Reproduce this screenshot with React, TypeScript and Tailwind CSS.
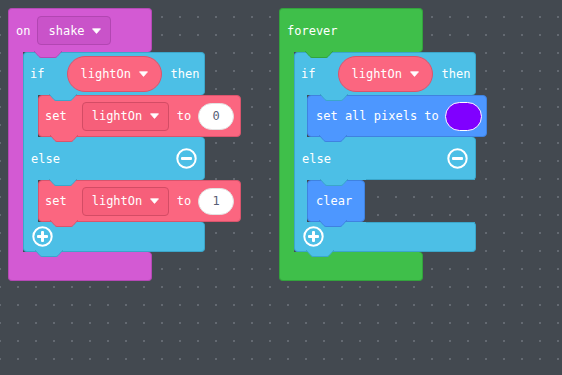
import type { ReactNode } from "react";

const mono = "font-['DejaVu_Sans_Mono',monospace] text-[12px] leading-none text-white";

function Tab({ fill, stroke, className }: { fill: string; stroke: string; className: string }) {
  return (
    <svg
      width="28"
      height="7"
      viewBox="0 0 28 7"
      className={`pointer-events-none absolute top-full z-10 -mt-px ${className}`}
    >
      <path d="M0 0 L5 5.6 Q5.8 6.5 7 6.5 L21 6.5 Q22.2 6.5 23 5.6 L28 0 Z" fill={fill} />
      <path d="M0 0 L5 5.6 Q5.8 6.5 7 6.5 L21 6.5 Q22.2 6.5 23 5.6 L28 0" fill="none" stroke={stroke} strokeWidth="1" />
    </svg>
  );
}

function Caret() {
  return (
    <svg width="9" height="6" viewBox="0 0 9 6" className="shrink-0">
      <path d="M0.5 0.8 L8.5 0.8 L4.5 5.4 Z" fill="#fff" stroke="#fff" strokeWidth="0.8" strokeLinejoin="round" />
    </svg>
  );
}

function CircleBtn({ plus }: { plus?: boolean }) {
  return (
    <svg width="21" height="21" viewBox="0 0 21 21" className="shrink-0">
      <circle cx="10.5" cy="10.5" r="9.2" fill="none" stroke="#fff" strokeWidth="2" />
      <rect x="5" y="9" width="11" height="3" rx="1" fill="#fff" />
      {plus && <rect x="9" y="5" width="3" height="11" rx="1" fill="#fff" />}
    </svg>
  );
}

function LightOnDropdown() {
  return (
    <div className="flex h-[29px] w-[87px] items-center rounded-[4px] border border-[#d34c65] bg-[#f65f7a] pl-[9px]">
      <span className={mono}>lightOn</span>
      <span className="ml-[8px]">
        <Caret />
      </span>
    </div>
  );
}

function LightOnPill() {
  return (
    <div className="flex h-[36px] w-[95px] items-center rounded-full border border-[#d9546c] bg-[#fb6680] pl-[12px]">
      <span className={mono}>lightOn</span>
      <span className="ml-[8px]">
        <Caret />
      </span>
    </div>
  );
}

function SetBlock({ value }: { value: string }) {
  return (
    <div className="relative flex h-[42px] w-[203px] items-center rounded-[4px] border border-[#d9546c] bg-[#fb6680] pl-[6px]">
      <span className={mono}>set</span>
      <div className="ml-[15px]">
        <LightOnDropdown />
      </div>
      <span className={`${mono} ml-[8px]`}>to</span>
      <div className="ml-[7px] flex h-[27px] w-[36px] items-center justify-center rounded-full border border-[#e2e2e2] bg-white">
        <span className="font-['DejaVu_Sans_Mono',monospace] text-[12px] leading-none text-[#575e75]">{value}</span>
      </div>
      <Tab fill="#fb6680" stroke="#d9546c" className="left-[11px]" />
    </div>
  );
}

function PixelsBlock() {
  return (
    <div className="relative flex h-[42px] w-[180px] items-center rounded-[4px] border border-[#3f82e0] bg-[#4d97ff] pl-[8px]">
      <span className={mono}>set all pixels to</span>
      <div className="ml-[6px] h-[29px] w-[37px] rounded-full border border-white bg-[#8000ff]" />
      <Tab fill="#4d97ff" stroke="#3f82e0" className="left-[11px]" />
    </div>
  );
}

function ClearBlock() {
  return (
    <div className="relative flex h-[42px] w-[58px] items-center rounded-[4px] border border-[#3f82e0] bg-[#4d97ff] pl-[8px]">
      <span className={mono}>clear</span>
      <Tab fill="#4d97ff" stroke="#3f82e0" className="left-[11px]" />
    </div>
  );
}

function IfElse({
  thenBody,
  elseBody,
  innerLine,
  bar,
}: {
  thenBody: ReactNode;
  elseBody: ReactNode;
  innerLine?: boolean;
  bar: string;
}) {
  return (
    <div className="flex flex-col items-start">
      <div className="relative flex h-[43px] w-[182px] items-center rounded-t-[4px] rounded-br-[4px] border-x border-t border-[#3ba6ca] bg-[#4cbfe6] pl-[6px]">
        <span className={mono}>if</span>
        <div className="ml-[23px]">
          <LightOnPill />
        </div>
        <span className={`${mono} ml-[8px]`}>then</span>
        <Tab fill="#4cbfe6" stroke="#3ba6ca" className="left-[25px]" />
      </div>
      <div className="flex">
        <div className={`${bar} self-stretch border-l border-[#3ba6ca] bg-[#4cbfe6]`} />
        {thenBody}
      </div>
      <div className="relative flex h-[43px] w-[182px] items-center justify-between rounded-r-[4px] border-l border-r border-[#3ba6ca] bg-[#4cbfe6] pl-[7px] pr-[7px]">
        <span className={mono}>else</span>
        <CircleBtn />
        {innerLine && <div className="absolute bottom-0 left-[71px] right-0 h-px bg-[#3ba6ca]" />}
        <Tab fill="#4cbfe6" stroke="#3ba6ca" className="left-[25px]" />
      </div>
      <div className="flex">
        <div className={`${bar} self-stretch border-l border-[#3ba6ca] bg-[#4cbfe6]`} />
        {elseBody}
      </div>
      <div className="relative flex h-[30px] w-[182px] items-center rounded-b-[4px] rounded-tr-[4px] border-x border-b border-[#3ba6ca] bg-[#4cbfe6] pl-[8px]">
        {innerLine && <div className="absolute left-[71px] right-0 top-0 h-px bg-[#3ba6ca]" />}
        <CircleBtn plus />
        <Tab fill="#4cbfe6" stroke="#3ba6ca" className="left-[11px]" />
      </div>
    </div>
  );
}

function EventBlock({
  header,
  body,
  fill,
  border,
}: {
  header: ReactNode;
  body: ReactNode;
  fill: string;
  border: string;
}) {
  return (
    <div className="flex flex-col items-start">
      <div className={`relative flex h-[44px] w-[144px] items-center rounded-t-[4px] rounded-br-[4px] border-x border-t pl-[7px] ${fill} ${border}`}>
        {header}
      </div>
      <div className="flex">
        <div className={`w-[15px] self-stretch border-l ${fill} ${border}`} />
        {body}
      </div>
      <div className={`h-[29px] w-[144px] rounded-b-[4px] rounded-tr-[4px] border-x border-b ${fill} ${border}`} />
    </div>
  );
}

export default function App() {
  return (
    <div className="relative h-[375px] w-[562px] overflow-hidden bg-[#434950] bg-[radial-gradient(circle,#646a72_0.7px,transparent_1px)] bg-[size:18px_18px] bg-[position:-9px_8px]">
      <div className="absolute left-[8px] top-[8px]">
        <EventBlock
          fill="bg-[#d35ad3]"
          border="border-[#b548b5]"
          header={
            <>
              <span className={mono}>on</span>
              <div className="ml-[7px] flex h-[29px] w-[74px] items-center rounded-[4px] border border-[#b246b2] bg-[#c953c9] pl-[10px]">
                <span className={mono}>shake</span>
                <span className="ml-[7px]">
                  <Caret />
                </span>
              </div>
              <Tab fill="#d35ad3" stroke="#b548b5" className="left-[25px]" />
            </>
          }
          body={<IfElse bar="w-[15px]" thenBody={<SetBlock value="0" />} elseBody={<SetBlock value="1" />} />}
        />
      </div>

      <div className="absolute left-[279px] top-[8px]">
        <EventBlock
          fill="bg-[#3fbf4a]"
          border="border-[#33a33d]"
          header={
            <>
              <span className={mono}>forever</span>
              <Tab fill="#3fbf4a" stroke="#33a33d" className="left-[25px]" />
            </>
          }
          body={<IfElse bar="w-[13px]" thenBody={<PixelsBlock />} elseBody={<ClearBlock />} innerLine />}
        />
      </div>
    </div>
  );
}
